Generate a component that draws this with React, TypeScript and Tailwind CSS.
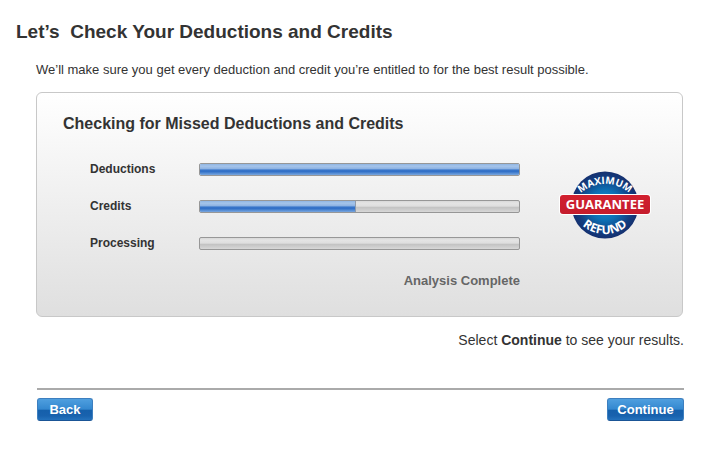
type Step = { id: string; label: string; value: number };

const steps: Step[] = [
  { id: "deductions", label: "Deductions", value: 100 },
  { id: "credits", label: "Credits", value: 49 },
  { id: "processing", label: "Processing", value: 0 },
];

function ProgressRow({ id, label, value }: Step) {
  return (
    <div className="flex h-5 items-center">
      <span id={id} className="w-[109px] shrink-0 text-[12px] leading-5 font-bold">
        {label}
      </span>
      <div
        role="progressbar"
        aria-labelledby={id}
        aria-valuemin={0}
        aria-valuemax={100}
        aria-valuenow={value}
        className="h-[13px] flex-1 overflow-hidden rounded-[2px] border border-[#979797] bg-[linear-gradient(#d8d8d8_0%,#e4e4e4_20%,#dedede_48%,#c2c2c2_55%,#cbcbcb_75%,#d8d8d8_100%)]"
      >
        {value > 0 && (
          <div
            className={`h-full bg-[linear-gradient(#8fb5e3_0%,#a5c4ea_20%,#8db2e2_44%,#3b78cb_54%,#2f6dc5_66%,#4681cf_78%,#7ba7de_100%)] ${value < 100 ? "border-r border-[#8f9bab]" : ""}`}
            style={{ width: `${value}%` }}
          />
        )}
      </div>
    </div>
  );
}

function GuaranteeBadge() {
  return (
    <svg
      viewBox="0 0 92 68"
      className="h-[68px] w-[92px] shrink-0 overflow-visible"
      role="img"
      aria-label="Maximum refund guarantee"
    >
      <defs>
        <radialGradient id="disc">
          <stop offset="0" stopColor="#1695d6" />
          <stop offset="0.45" stopColor="#0d70b4" />
          <stop offset="0.8" stopColor="#123f82" />
          <stop offset="1" stopColor="#15306f" />
        </radialGradient>
        <linearGradient id="band" x1="0" y1="0" x2="0" y2="1">
          <stop offset="0" stopColor="#d2202f" />
          <stop offset="1" stopColor="#c41c2c" />
        </linearGradient>
        <path id="upper" d="M16 29 A36 36 0 0 1 76 29" />
        <path id="lower" d="M16 45 A34 34 0 0 0 76 45" />
      </defs>
      <circle cx="46" cy="34" r="33.5" fill="url(#disc)" />
      <g fill="#fff" fontFamily="'Open Sans', 'Noto Sans', sans-serif" fontWeight="700" textAnchor="middle">
        <text fontSize="10">
          <textPath href="#upper" startOffset="50%">MAXIMUM</textPath>
        </text>
        <text fontSize="12">
          <textPath href="#lower" startOffset="50%">REFUND</textPath>
        </text>
        <rect x="0" y="23" width="92" height="21" rx="4" />
        <rect x="1" y="24" width="90" height="19" rx="3" fill="url(#band)" />
        <text x="46" y="38" fontSize="13">GUARANTEE</text>
      </g>
    </svg>
  );
}

const buttonStyle =
  "h-[23px] rounded-[3px] border border-[#3d7fbf] border-b-[#1a5596] bg-[linear-gradient(#4f9fdf_0%,#3488d0_48%,#1560ab_54%,#1862ae_80%,#2472bd_100%)] text-[13px] leading-5 font-bold text-white";

export default function App() {
  return (
    <main className="bg-white px-4 pt-5 pb-11 font-['Liberation_Sans',Arial,sans-serif] text-[#333]">
      <h1 className="text-[19px] leading-6 font-bold whitespace-pre">
        Let’s  Check Your Deductions and Credits
      </h1>
      <div className="ml-5 mr-[21px]">
        <p className="mt-4 text-[13px] leading-5">
          We’ll make sure you get every deduction and credit you’re entitled to for the best result possible.
        </p>

        <section className="mt-3 mr-px rounded-md border border-[#c8c8c8] bg-linear-to-b from-white to-[#dfdfdf] px-[26px] pt-[21px] pb-[25px]">
          <h2 className="text-[16px] leading-5 font-bold">Checking for Missed Deductions and Credits</h2>
          <div className="mt-[25px] mr-[5px] ml-[27px] flex items-start gap-[39px]">
            <div className="flex-1">
              <div className="flex flex-col gap-[17px]">
                {steps.map((step) => (
                  <ProgressRow key={step.id} {...step} />
                ))}
              </div>
              <p className="mt-[18px] text-right text-[13px] leading-5 font-bold text-[#666]">Analysis Complete</p>
            </div>
            <div className="mt-3">
              <GuaranteeBadge />
            </div>
          </div>
        </section>

        <p className="mt-[13px] text-right text-[14px] leading-5">
          Select <strong>Continue</strong> to see your results.
        </p>

        <footer className="mt-[38px] ml-px flex justify-between border-t-2 border-[#aaa] pt-2">
          <button type="button" className={`${buttonStyle} w-14`}>
            Back
          </button>
          <button type="button" className={`${buttonStyle} w-[77px]`}>
            Continue
          </button>
        </footer>
      </div>
    </main>
  );
}
